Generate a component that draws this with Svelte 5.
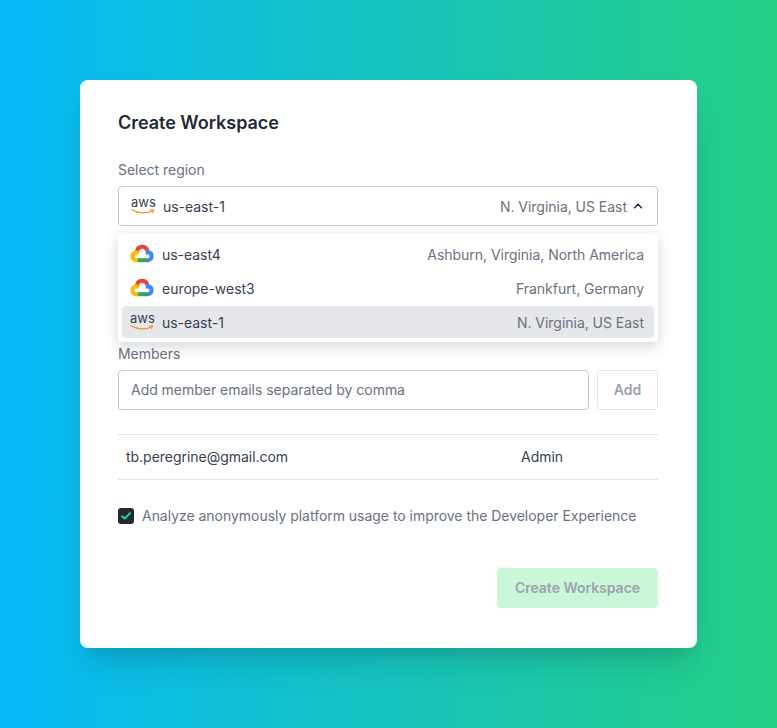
<script>
  const regions = [
    { kind: 'gcp', name: 'us-east4', place: 'Ashburn, Virginia, North America' },
    { kind: 'gcp', name: 'europe-west3', place: 'Frankfurt, Germany' },
    { kind: 'aws', name: 'us-east-1', place: 'N. Virginia, US East', active: true }
  ];
</script>

{#snippet aws()}
  <span class="aws">
    <span class="aws-text">aws</span>
    <svg class="aws-smile" width="24" height="6" viewBox="0 0 24 6" fill="none">
      <path d="M1 .8C7 4.600 16 5 21.600 1.800" stroke="#f09a1f" stroke-width="1.300" stroke-linecap="round"/>
      <path d="M19.600 1.100 22.600 .9 21.600 3.600" stroke="#f09a1f" stroke-width="1.100" stroke-linecap="round" stroke-linejoin="round"/>
    </svg>
  </span>
{/snippet}

{#snippet gcp()}
  <svg class="gcp" width="24" height="20" viewBox="0 0 24 20" fill="none">
    <path d="M6.800 7.500C7.400 4 9.700 2.700 12.200 2.700c2.400 0 4.200 1.300 5 3.500" stroke="#ea4335" stroke-width="4"/>
    <path d="M17 5.600c.5.900.7 1.800.7 3 2.400 0 3.900 1.500 3.900 3.700 0 2.400-1.700 3.900-3.900 3.900h-2" stroke="#4285f4" stroke-width="4"/>
    <path d="M7.500 16.200H16.500" stroke="#34a853" stroke-width="4"/>
    <path d="M7.800 16.200H6.400c-2.300 0-4-1.700-4-3.900 0-2.300 1.700-3.900 4-3.900 1 0 1.800.3 2.600.9" stroke="#fbbc05" stroke-width="4"/>
  </svg>
{/snippet}

<div class="page">
  <div class="card">
    <h1>Create Workspace</h1>

    <div class="field region">
      <div class="label">Select region</div>
      <div class="select">
        {@render aws()}
        <span class="name">us-east-1</span>
        <span class="place">N. Virginia, US East</span>
        <svg class="chev" width="10" height="6" viewBox="0 0 10 6" fill="none">
          <path d="M1.500 4.700 5 1.300l3.500 3.400" stroke="#1f2937" stroke-width="1.500" stroke-linecap="round" stroke-linejoin="round"/>
        </svg>
      </div>
      <div class="menu">
        {#each regions as r}
          <div class="option" class:active={r.active}>
            <span class="logo">
              {#if r.kind === 'aws'}{@render aws()}{:else}{@render gcp()}{/if}
            </span>
            <span class="name">{r.name}</span>
            <span class="place">{r.place}</span>
          </div>
        {/each}
      </div>
    </div>

    <div class="field members">
      <div class="label">Members</div>
      <div class="add-row">
        <div class="input">Add member emails separated by comma</div>
        <div class="add">Add</div>
      </div>
    </div>

    <div class="member">
      <span class="email">tb.peregrine@gmail.com</span>
      <span class="role">Admin</span>
    </div>

    <div class="consent">
      <span class="check">
        <svg width="10" height="8" viewBox="0 0 10 8" fill="none">
          <path d="M1 4.300 3.600 6.600 9 1.200" stroke="#2dd48f" stroke-width="2" stroke-linecap="round" stroke-linejoin="round"/>
        </svg>
      </span>
      <span>Analyze anonymously platform usage to improve the Developer Experience</span>
    </div>

    <div class="actions">
      <div class="submit">Create Workspace</div>
    </div>
  </div>
</div>

<style>
  :global(body) {
    margin: 0;
  }
  .page {
    box-sizing: border-box;
    width: 777px;
    height: 728px;
    padding: 80px;
    background: linear-gradient(90deg, #06b9f8 0%, #25cf84 100%);
    font-family: Inter, "Liberation Sans", sans-serif;
    font-size: 14px;
    letter-spacing: -0.03px;
    color: #374151;
  }
  .card {
    box-sizing: border-box;
    width: 617px;
    height: 568px;
    padding: 30px 39px 0 38px;
    background: #fff;
    border-radius: 8px;
    box-shadow: 0 20px 30px -8px rgba(17, 60, 70, 0.22), 0 8px 12px -6px rgba(17, 60, 70, 0.1);
  }
  h1 {
    margin: 0;
    padding-top: 1px;
    font-size: 18px;
    line-height: 23px;
    font-weight: 600;
    color: #1f2937;
  }
  .label {
    line-height: 20px;
    color: #6b7280;
    margin-bottom: 6px;
  }
  .region {
    position: relative;
    margin-top: 26px;
  }
  .select {
    box-sizing: border-box;
    display: flex;
    align-items: center;
    height: 40px;
    padding: 0 14px 0 12px;
    border: 1px solid #c5c8ce;
    border-radius: 4px;
  }
  .select .name {
    margin-left: 8px;
    color: #374151;
  }
  .place {
    margin-left: auto;
    color: #6b7280;
  }
  .chev {
    margin-left: 6px;
  }
  .menu {
    position: absolute;
    z-index: 1;
    left: 0;
    right: 0;
    top: 74px;
    box-sizing: border-box;
    display: flex;
    flex-direction: column;
    gap: 2px;
    height: 108px;
    padding: 4px;
    background: #fff;
    border-radius: 4px;
    box-shadow: 0 4px 14px rgba(31, 41, 55, 0.2);
  }
  .option {
    display: flex;
    align-items: center;
    height: 32px;
    padding: 0 10px 0 8px;
    border-radius: 4px;
  }
  .option.active {
    background: #e5e7eb;
  }
  .logo {
    display: flex;
    justify-content: center;
    width: 24px;
    margin-right: 8px;
  }
  .aws {
    position: relative;
    display: block;
    width: 24px;
    height: 20px;
    flex: none;
  }
  .aws-text {
    position: absolute;
    left: 0;
    top: -1px;
    font-size: 13px;
    line-height: 15px;
    color: #374151;
  }
  .aws-smile {
    position: absolute;
    left: 0;
    top: 13px;
  }
  .gcp {
    display: block;
  }
  .members {
    margin-top: 118px;
  }
  .add-row {
    display: flex;
    gap: 8px;
  }
  .input {
    box-sizing: border-box;
    flex: 1;
    height: 40px;
    padding: 0 12px;
    line-height: 38px;
    border: 1px solid #c5c8ce;
    border-radius: 4px;
    color: #6b7280;
  }
  .add {
    box-sizing: border-box;
    width: 61px;
    height: 40px;
    line-height: 38px;
    text-align: center;
    border: 1px solid #e5e7eb;
    border-radius: 4px;
    font-weight: 600;
    color: #9ca3af;
  }
  .member {
    box-sizing: border-box;
    display: flex;
    height: 46px;
    margin-top: 24px;
    padding: 0 0 2px 8px;
    align-items: center;
    border-top: 1px solid #e5e7eb;
    border-bottom: 1px solid #e5e7eb;
    color: #374151;
  }
  .email {
    width: 395px;
  }
  .consent {
    display: flex;
    align-items: center;
    gap: 8px;
    margin-top: 26px;
    line-height: 20px;
    color: #6b7280;
  }
  .check {
    display: flex;
    align-items: center;
    justify-content: center;
    width: 16px;
    height: 16px;
    border-radius: 3px;
    background: #1f2937;
  }
  .actions {
    display: flex;
    justify-content: flex-end;
    margin-top: 42px;
  }
  .submit {
    width: 161px;
    height: 40px;
    line-height: 40px;
    text-align: center;
    border-radius: 4px;
    background: #c9f7d8;
    font-weight: 600;
    color: #9ca3af;
  }
</style>
